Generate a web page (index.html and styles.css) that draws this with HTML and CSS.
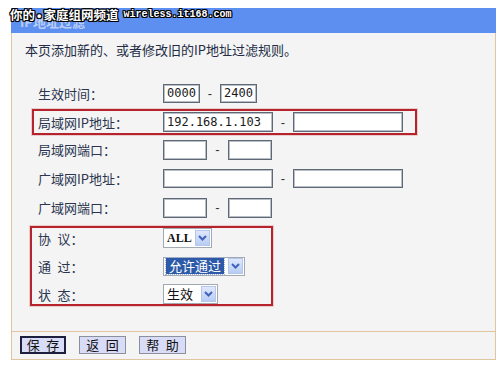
FILE: index.html
```html
<!DOCTYPE html>
<html lang="zh-CN">
<head>
<meta charset="utf-8">
<title>IP地址过滤</title>
<link rel="stylesheet" href="styles.css">
</head>
<body>
<div class="page">
  <div class="watermark"><span class="wm-cn">你的<span class="wm-dot">•</span>家庭组网频道</span><span class="wm-en">wireless.it168.com</span></div>
  <div class="panel">
    <div class="panel-head">IP地址过滤</div>
    <div class="panel-body">
      <p class="intro">本页添加新的、或者修改旧的IP地址过滤规则。</p>
      <div class="form">
        <div class="row row-first">
          <span class="label">生效时间：</span>
          <input class="in w-time" value="0000"><span class="dash">-</span><input class="in w-time" value="2400">
        </div>
        <div class="hl hl-one">
          <div class="row row-hl">
            <span class="label">局域网IP地址：</span>
            <input class="in w-ip tall" value="192.168.1.103"><span class="dash">-</span><input class="in w-ip tall" value="">
          </div>
        </div>
        <div class="row">
          <span class="label">局域网端口：</span>
          <input class="in w-port tall" value=""><span class="dash dash-port">-</span><input class="in w-port tall" value="">
        </div>
        <div class="row">
          <span class="label">广域网IP地址：</span>
          <input class="in w-ip" value=""><span class="dash">-</span><input class="in w-ip" value="">
        </div>
        <div class="row">
          <span class="label">广域网端口：</span>
          <input class="in w-port tall" value=""><span class="dash dash-port">-</span><input class="in w-port tall" value="">
        </div>
        <div class="hl hl-two">
          <div class="row row-sel">
            <span class="label">协&#8194;议：</span>
            <div class="select s-all"><span class="s-text latin">ALL</span><span class="s-arrow"><svg width="9" height="6" viewBox="0 0 9 6"><path d="M1 1 L4.5 4.5 L8 1" fill="none" stroke="#3f63bd" stroke-width="2"/></svg></span></div>
          </div>
          <div class="row row-sel">
            <span class="label">通&#8194;过：</span>
            <div class="select s-pass"><span class="s-text picked">允许通过</span><span class="s-arrow"><svg width="9" height="6" viewBox="0 0 9 6"><path d="M1 1 L4.5 4.5 L8 1" fill="none" stroke="#3f63bd" stroke-width="2"/></svg></span></div>
          </div>
          <div class="row row-sel">
            <span class="label">状&#8194;态：</span>
            <div class="select s-state"><span class="s-text">生效</span><span class="s-arrow"><svg width="9" height="6" viewBox="0 0 9 6"><path d="M1 1 L4.5 4.5 L8 1" fill="none" stroke="#3f63bd" stroke-width="2"/></svg></span></div>
          </div>
        </div>
      </div>
    </div>
    <div class="panel-foot">
      <button class="btn btn-focus">保&#8194;存</button>
      <button class="btn">返&#8194;回</button>
      <button class="btn">帮&#8194;助</button>
    </div>
  </div>
</div>
</body>
</html>
```

FILE: styles.css
```css
* { box-sizing: border-box; }
html, body {
  margin: 0;
  padding: 0;
  background: #ffffff;
}
body {
  font-family: "Noto Sans CJK SC", "Noto Sans", sans-serif;
  font-size: 13px;
  color: #263049;
}
.page {
  position: relative;
  padding: 8px 0 0 11px;
  width: 500px;
  height: 365px;
}
.watermark {
  position: absolute;
  left: 10px;
  top: 7px;
  height: 16px;
  line-height: 16px;
  display: flex;
  align-items: center;
  gap: 5px;
  color: #ffffff;
  text-shadow: 1px 0 0 #000, -1px 0 0 #000, 0 1px 0 #000, 0 -1px 0 #000,
    1px 1px 0 #000, -1px -1px 0 #000, 1px -1px 0 #000, -1px 1px 0 #000;
  z-index: 2;
}
.wm-cn {
  font-size: 12.5px;
  font-weight: 700;
}
.wm-dot {
  font-family: "Liberation Sans", sans-serif;
  padding: 0 2px;
}
.wm-en {
  font-family: "Liberation Mono", monospace;
  font-size: 10px;
  font-weight: 700;
}
.panel {
  width: 485px;
}
.panel-head {
  height: 25px;
  background: #5d8ff0;
  color: #b9cdf6;
  font-weight: 700;
  font-size: 13px;
  line-height: 28px;
  padding-left: 9px;
}
.panel-body {
  height: 299px;
  background: #f4f4f4;
  border: 1px solid #dfc69e;
  border-top: none;
}
.intro {
  margin: 0;
  padding: 8px 0 0 13px;
  line-height: 18px;
  font-size: 13px;
  color: #222c45;
}
.form {
  margin-top: 20px;
}
.row {
  display: flex;
  align-items: center;
  height: 29px;
  padding-left: 26px;
}
.row-first {
  height: 28px;
}
.label {
  width: 125px;
  flex: none;
  white-space: nowrap;
  color: #2b3550;
}
.hl {
  border: 2px solid #b5242c;
  box-shadow: 0 0 0 1px rgba(214, 130, 130, 0.35);
}
.hl-one {
  margin: 2px 0 0 20px;
  width: 385px;
}
.row-hl {
  height: 22px;
  padding-left: 4px;
}
.hl-two {
  margin: 4px 0 0 18px;
  width: 243px;
  display: flex;
  flex-direction: column;
  gap: 8px;
}
.row-sel {
  height: 20px;
  padding-left: 6px;
}
.in {
  flex: none;
  height: 19px;
  margin: 0;
  padding: 0 3px;
  background: #ffffff;
  border: 1px solid #5f6875;
  box-shadow: inset 0 0 0 1px #b9bec6;
  font-family: "DejaVu Sans Mono", monospace;
  font-size: 12px;
  color: #1a1a1a;
  outline: none;
}
.tall { height: 20px; }
.w-time { width: 37px; }
.w-ip { width: 110px; }
.w-port { width: 44px; }
.dash {
  width: 20px;
  text-align: center;
  color: #333;
  font-family: "Liberation Sans", sans-serif;
}
.dash-port { width: 21px; }
.select {
  display: flex;
  align-items: center;
  justify-content: space-between;
  height: 20px;
  background: #ffffff;
  border: 1px solid #a3a9b3;
  padding: 0 1px 0 2px;
}
.s-all { width: 49px; }
.s-pass { width: 82px; height: 19px; }
.s-state { width: 55px; }
.s-text {
  font-size: 13px;
  color: #111;
  line-height: 16px;
  padding: 0 1px;
}
.latin {
  font-family: "Liberation Serif", serif;
  font-weight: 700;
  font-size: 12px;
}
.picked {
  background: #2d5aa8;
  color: #ffffff;
  padding: 0 3px;
  outline: 1px dotted #9fb3da;
}
.s-arrow {
  width: 15px;
  height: 16px;
  display: flex;
  align-items: center;
  justify-content: center;
  background: linear-gradient(#dfe8fc, #b8ccf3);
  border: 1px solid #b4c6ec;
}
.panel-foot {
  height: 28px;
  border: 1px solid #dfc69e;
  border-top: none;
  background: #f4f4f4;
  display: flex;
  align-items: flex-start;
  gap: 13px;
  padding: 4px 0 0 8px;
}
.btn {
  height: 18px;
  width: 47px;
  margin: 0;
  padding: 0;
  background: #d9dcf6;
  border: 1px solid #8c909e;
  font-family: "Noto Sans CJK SC", sans-serif;
  font-size: 13px;
  line-height: 14px;
  color: #111;
}
.btn-focus {
  width: 46px;
  border: 2px solid #1c1f3e;
}
```
